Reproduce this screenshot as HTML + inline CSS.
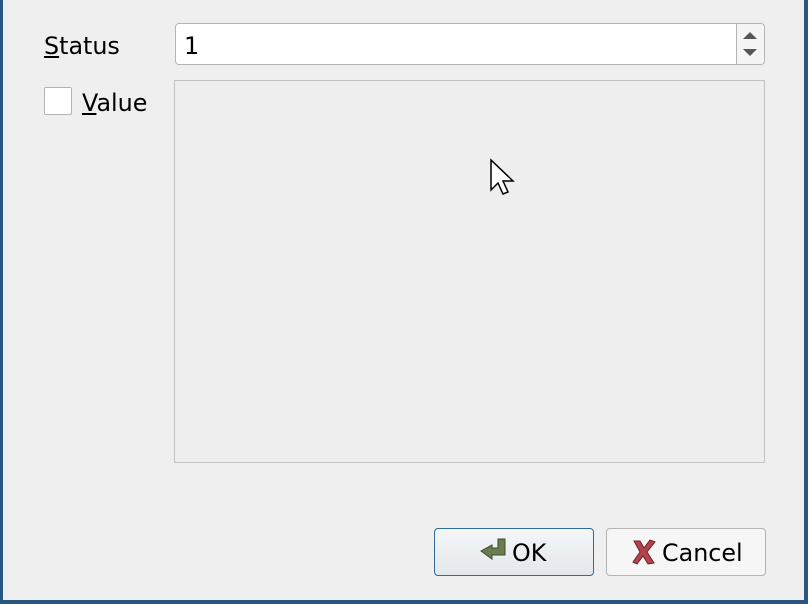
<!DOCTYPE html>
<html><head><style>
body{margin:0;width:808px;height:604px;background:#efefef;position:relative;overflow:hidden;font-family:"DejaVu Sans",sans-serif;font-size:23.8px;color:#000}
.b{position:absolute}
</style></head><body>
<div class="b" style="left:0;top:0;width:3px;height:604px;background:#29567f"></div>
<div class="b" style="right:0;top:0;width:4px;height:604px;background:#29567f"></div>
<div class="b" style="left:0;bottom:0;width:808px;height:4px;background:#29567f"></div>

<div class="b" style="left:44px;top:31px;line-height:30px"><u>S</u>tatus</div>
<div class="b" style="left:175px;top:23px;width:588px;height:40px;border:1px solid #b4b4b4;border-radius:4px;background:#fff"></div>
<div class="b" style="left:184px;top:31px;line-height:30px">1</div>
<div class="b" style="left:736px;top:24px;width:1px;height:40px;background:#b4b4b4"></div>
<div class="b" style="left:737px;top:24px;width:27px;height:40px;background:#f4f4f4;border-radius:0 4px 4px 0"></div>
<svg class="b" style="left:740px;top:30px" width="20" height="30"><path d="M3 9 L10 2 L17 9Z M3 19 L17 19 L10 26Z" fill="#555"/></svg>

<div class="b" style="left:44px;top:87px;width:26px;height:26px;border:1px solid #b4b4b4;background:#fff;border-radius:2px"></div>
<div class="b" style="left:82px;top:88px;line-height:30px"><u>V</u>alue</div>

<div class="b" style="left:174px;top:80px;width:589px;height:381px;border:1px solid #c2c2c2;background:#eeeeee"></div>

<svg class="b" style="left:488px;top:158px" width="30" height="46"><path d="M3 2 L3 32 L10 25 L15 36 L20 34 L15 23 L25 23 Z" fill="#fff" stroke="#000" stroke-width="1.5"/></svg>

<div class="b" style="left:434px;top:528px;width:158px;height:46px;border:1px solid #2f6a9e;border-radius:4px;background:linear-gradient(#f4f6f8,#e3e8ec)"></div>
<svg class="b" style="left:478px;top:537px" width="34" height="30"><path d="M20 2 L27 2 L27 18 L14 18 L14 22 L3 14 L14 8 L14 11 L20 11Z" fill="#6b7d4e" stroke="#3f4b2c" stroke-width="1"/></svg>
<div class="b" style="left:512px;top:538px;line-height:30px">OK</div>

<div class="b" style="left:606px;top:528px;width:158px;height:46px;border:1px solid #b4b4b4;border-radius:4px;background:#f6f6f6"></div>
<svg class="b" style="left:630px;top:538px" width="28" height="28"><path d="M4 3 L10 3 L14 10 L20 2 L25 4 L17 14 L24 25 L18 26 L13 18 L7 26 L3 24 L10 14 Z" fill="#b3434a" stroke="#6a2428" stroke-width="1"/></svg>
<div class="b" style="left:662px;top:538px;line-height:30px">Cancel</div>
</body></html>
